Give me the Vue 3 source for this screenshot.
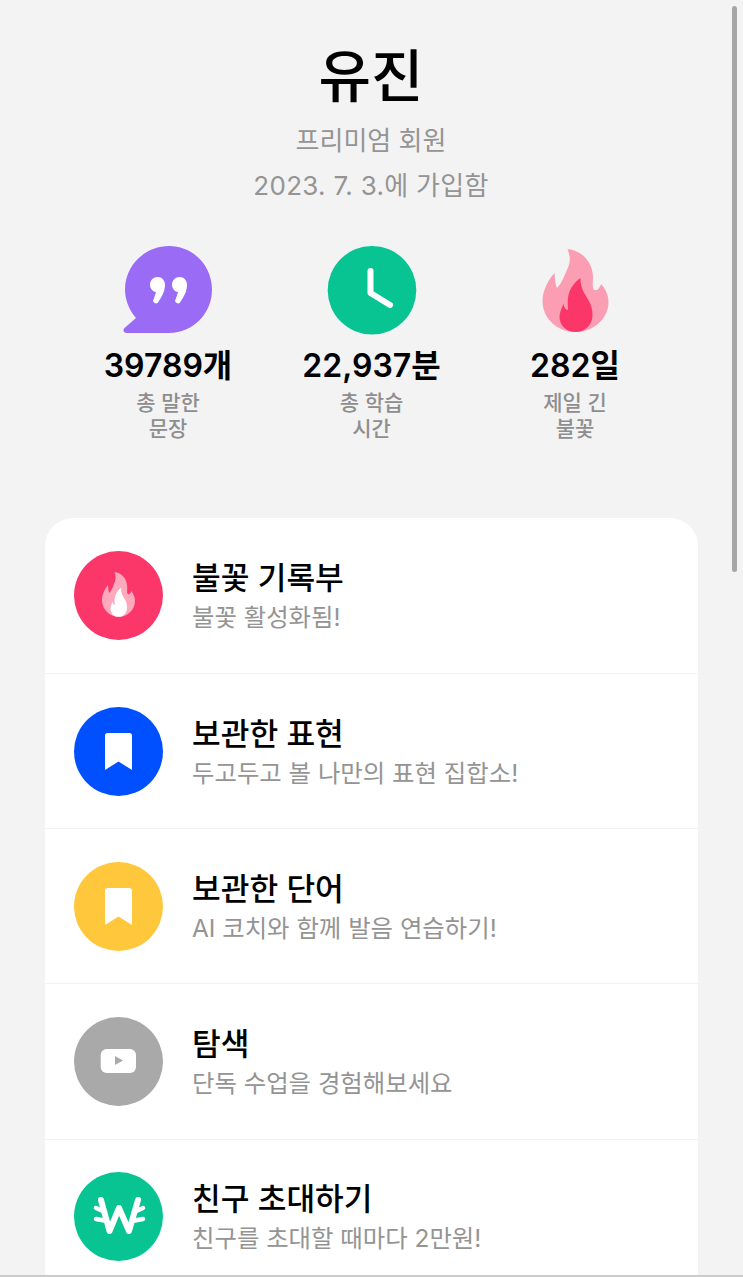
<template>
  <div class="page">
    <header class="profile">
      <h1>유진</h1>
      <p class="plan">프리미엄 회원</p>
      <p class="joined">2023. 7. 3.에 가입함</p>
    </header>

    <section class="stats">
      <div v-for="s in stats" :key="s.value" class="stat">
        <svg class="stat-icon" viewBox="0 0 90 90" v-html="s.icon"></svg>
        <strong>{{ s.value }}</strong>
        <span>{{ s.line1 }}<br />{{ s.line2 }}</span>
      </div>
    </section>

    <section class="card">
      <div v-for="m in menu" :key="m.title" class="row">
        <div class="circle" :style="{ background: m.color }">
          <svg viewBox="0 0 89 89" v-html="m.icon"></svg>
        </div>
        <div class="row-text">
          <h2>{{ m.title }}</h2>
          <p>{{ m.sub }}</p>
        </div>
      </div>
    </section>

    <div class="scrollbar"></div>
    <div class="bottom-line"></div>
  </div>
</template>

<script setup>
const outerFlame = 'M37.500 3C50 4 62 14 63 30C63 36 62 41 64 44C67 45 70 42 71 38C75 42 78.500 49 78.500 56C78.500 73 63 86 45.500 86C28 86 12.500 73 12.500 55C12.500 44 19 33 24.500 27C25 32 25 38 27 42C31 38 34 31 36 26C39 20 42 14 37.500 3Z'
const innerFlame = 'M50.500 32C50 42 55 48 59 55C61.500 60 62.500 64 62.500 69C62.500 79 55 86 45.500 86C36 86 29.500 79 29.500 71C29.500 67 31.500 62 33.500 58C34 61 36 64 38 64C38 60 37 55 38.500 49C40 42 45 36 50.500 32Z'

const bookmark = '<path fill="#fff" d="M33.500 26H55.500C57 26 58 27 58 28.500V63L44.500 54.500L31 63V28.500C31 27 32 26 33.500 26Z"/>'

const quote = 'M34.500 31C39 31 42 34.500 42 39C42 46 38 52 35 56.500C34 58 31.500 57.500 30.500 56C30 55 30 54 31 52.500L33 46C29.500 45.500 27 42.500 27 38.500C27 34.500 30.500 31 34.500 31Z'

const stats = [
  {
    value: '39789개',
    line1: '총 말한',
    line2: '문장',
    icon: `<path fill="#9a6bf5" d="M46 0C70 0 89 19.500 89 43.500C89 67.500 70 87 46 87H4C0.500 87 -0.500 84 1.500 82L13 72C6.500 64.500 2 54.500 2 43.500C2 19.500 22 0 46 0Z"/>
      <path fill="#fff" d="${quote}"/>
      <path fill="#fff" transform="translate(22 0)" d="${quote}"/>`
  },
  {
    value: '22,937분',
    line1: '총 학습',
    line2: '시간',
    icon: `<circle cx="45" cy="44.300" r="44.300" fill="#08c493"/>
      <path fill="none" stroke="#fff" stroke-width="6" stroke-linecap="round" stroke-linejoin="round" d="M43.500 25V47L63 59"/>`
  },
  {
    value: '282일',
    line1: '제일 긴',
    line2: '불꽃',
    icon: `<path fill="#fb9db3" d="${outerFlame}"/><path fill="#fb3668" d="${innerFlame}"/>`
  }
]

const menu = [
  {
    title: '불꽃 기록부',
    sub: '불꽃 활성화됨!',
    color: '#fb3668',
    icon: `<g transform="translate(21.750 19.400) scale(0.5 0.54)"><path fill="#ffa9bd" d="${outerFlame}"/><path fill="#fff" d="${innerFlame}"/></g>`
  },
  { title: '보관한 표현', sub: '두고두고 볼 나만의 표현 집합소!', color: '#0050ff', icon: bookmark },
  { title: '보관한 단어', sub: 'AI 코치와 함께 발음 연습하기!', color: '#ffc73c', icon: bookmark },
  {
    title: '탐색',
    sub: '단독 수업을 경험해보세요',
    color: '#a9a9a9',
    icon: `<rect x="26.700" y="32" width="35.300" height="24" rx="6" fill="#fff"/><path fill="#a9a9a9" d="M41 39L49 43.500L41 48Z"/>`
  },
  {
    title: '친구 초대하기',
    sub: '친구를 초대할 때마다 2만원!',
    color: '#08c493',
    icon: `<path fill="none" stroke="#fff" stroke-width="6" stroke-linecap="round" stroke-linejoin="round" d="M27 28L35.500 59L45 36L55 59L64 28"/>
      <path fill="none" stroke="#fff" stroke-width="4.500" stroke-linecap="round" d="M22 36L31 40M22 47L33 49M69 36L60 40M69 47L58 49"/>`
  }
]
</script>

<style>
html, body {
  margin: 0;
  height: 100%;
  overflow: hidden;
  background: #f3f3f3;
}
</style>

<style scoped>
.page {
  position: relative;
  height: 1277px;
  overflow: hidden;
  background: #f3f3f3;
  font-family: Inter, "Noto Sans CJK KR", sans-serif;
  color: #000;
}
.profile {
  text-align: center;
  padding-top: 42px;
  width: 742px;
}
h1 {
  margin: 0;
  font-size: 57px;
  line-height: 70px;
  font-weight: 500;
}
.plan, .joined {
  margin: 0;
  color: #949494;
  font-size: 26px;
  line-height: 36px;
}
.plan {
  margin-top: 11px;
}
.joined {
  margin-top: 9px;
  letter-spacing: 0.3px;
}
.stats {
  display: grid;
  grid-template-columns: 203.500px 203.500px 203.500px;
  justify-content: center;
  margin-top: 42px;
}
.stat {
  display: flex;
  flex-direction: column;
  align-items: center;
}
.stat-icon {
  width: 90px;
  height: 90px;
}
.stat strong {
  margin-top: 10px;
  font-size: 32px;
  line-height: 40px;
  font-weight: 600;
  white-space: nowrap;
}
.stat span {
  margin-top: 4px;
  text-align: center;
  color: #8e8e8e;
  font-size: 21px;
  line-height: 26px;
  font-weight: 500;
}
.card {
  margin: 76px 45px 0 45px;
  padding-top: 0.600px;
  background: #fff;
  border-radius: 28px 28px 0 0;
}
.row {
  display: flex;
  align-items: center;
  gap: 29px;
  height: 155.300px;
  box-sizing: border-box;
  padding-left: 29px;
  border-bottom: 1px solid #f3f3f3;
}
.circle {
  width: 89px;
  height: 89px;
  border-radius: 50%;
  flex: none;
}
.circle svg {
  display: block;
  width: 89px;
  height: 89px;
}
h2 {
  margin: 0;
  font-size: 31.200px;
  line-height: 42px;
  font-weight: 500;
}
.row-text p {
  margin: 1px 0 0;
  color: #949494;
  font-size: 24.400px;
  line-height: 34px;
}
.scrollbar {
  position: absolute;
  left: 732px;
  top: 6px;
  width: 5px;
  height: 566px;
  border-radius: 3px;
  background: #a6a6a6;
}
.bottom-line {
  position: absolute;
  left: 0;
  right: 0;
  bottom: 0;
  height: 2px;
  background: #cbcbcb;
}
</style>
